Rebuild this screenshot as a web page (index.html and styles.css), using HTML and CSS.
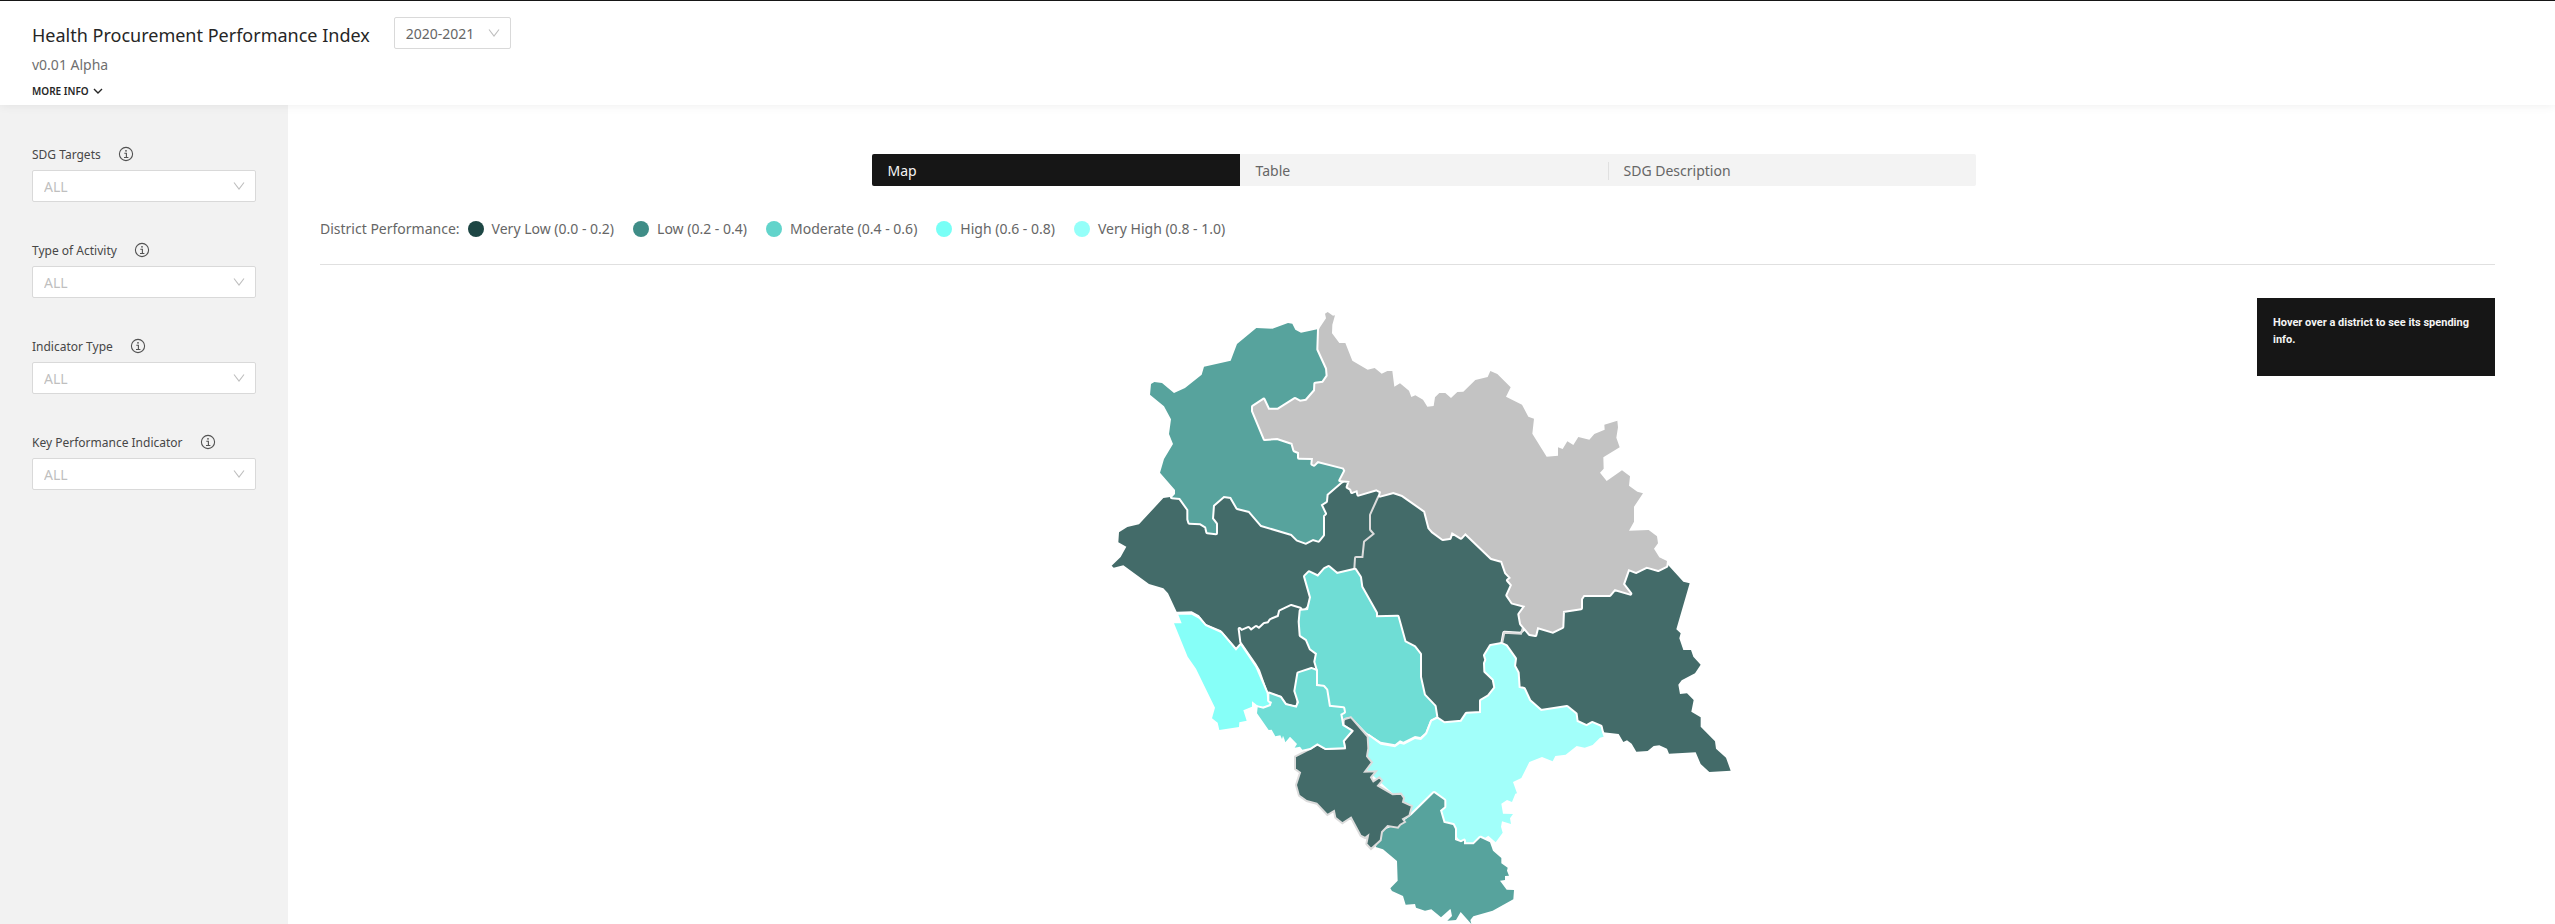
FILE: index.html
```html
<!DOCTYPE html>
<html lang="en">
<head>
<meta charset="utf-8">
<title>Health Procurement Performance Index</title>
<link rel="stylesheet" href="styles.css">
</head>
<body>
<svg class="defs" aria-hidden="true">
  <symbol id="chevron" viewBox="0 0 12 12"><path d="M1 2.5 6 9.2 11 2.5" fill="none" stroke="currentColor" stroke-width="1.1"/></symbol>
  <symbol id="info" viewBox="0 0 16 16"><circle cx="8" cy="8" r="6.6" fill="none" stroke="currentColor" stroke-width="1.1"/><path d="M6.3 7.3h2.1v4.2M6 11.5h4.4" fill="none" stroke="currentColor" stroke-width="1.1"/><circle cx="8" cy="4.8" r=".9" fill="currentColor"/></symbol>
</svg>
<header class="header">
  <div class="title-row">
    <h1 class="title">Health Procurement Performance Index</h1>
    <div class="select select-year">
      <select aria-label="Year"><option>2020-2021</option></select>
      <svg class="chevron"><use href="#chevron"/></svg>
    </div>
  </div>
  <p class="version">v0.01 Alpha</p>
  <button class="more" type="button">MORE INFO
    <svg class="more-icon" viewBox="0 0 10 10"><path d="M1 3l4 4 4-4" fill="none" stroke="currentColor" stroke-width="1.4"/></svg>
  </button>
</header>
<div class="page">
  <aside class="sidebar">
    <div class="field">
      <div class="field-head"><label for="sdg">SDG Targets</label><button class="info" type="button" aria-label="About SDG targets"><svg><use href="#info"/></svg></button></div>
      <div class="select"><select id="sdg"><option>ALL</option></select><svg class="chevron"><use href="#chevron"/></svg></div>
    </div>
    <div class="field">
      <div class="field-head"><label for="activity">Type of Activity</label><button class="info" type="button" aria-label="About type of activity"><svg><use href="#info"/></svg></button></div>
      <div class="select"><select id="activity"><option>ALL</option></select><svg class="chevron"><use href="#chevron"/></svg></div>
    </div>
    <div class="field">
      <div class="field-head"><label for="indicator">Indicator Type</label><button class="info" type="button" aria-label="About indicator type"><svg><use href="#info"/></svg></button></div>
      <div class="select"><select id="indicator"><option>ALL</option></select><svg class="chevron"><use href="#chevron"/></svg></div>
    </div>
    <div class="field">
      <div class="field-head"><label for="kpi">Key Performance Indicator</label><button class="info" type="button" aria-label="About key performance indicator"><svg><use href="#info"/></svg></button></div>
      <div class="select"><select id="kpi"><option>ALL</option></select><svg class="chevron"><use href="#chevron"/></svg></div>
    </div>
  </aside>
  <main class="main">
    <div class="tabs-wrap">
      <div class="tabs" role="tablist">
        <button class="tab tab-active" type="button" role="tab" aria-selected="true">Map</button>
        <button class="tab" type="button" role="tab" aria-selected="false">Table</button>
        <button class="tab tab-divided" type="button" role="tab" aria-selected="false">SDG Description</button>
      </div>
    </div>
    <div class="legend">
      <span class="legend-title">District Performance:</span>
      <ul class="legend-list">
        <li><i class="dot dot-very-low"></i>Very Low (0.0 - 0.2)</li>
        <li><i class="dot dot-low"></i>Low (0.2 - 0.4)</li>
        <li><i class="dot dot-moderate"></i>Moderate (0.4 - 0.6)</li>
        <li><i class="dot dot-high"></i>High (0.6 - 0.8)</li>
        <li><i class="dot dot-very-high"></i>Very High (0.8 - 1.0)</li>
      </ul>
    </div>
    <section class="map-area">
      <svg class="map" viewBox="0 0 1920 1872" role="img" aria-label="District map">
        <path class="d very-low" d="M216 590L190 594 117 673 82 681 57 697 55 727 79 740 62 771 35 797 41 803 70 796 147 852 190 865 204 880 230 935 275 934 297 946 316 971 363 991 408 1044 440 1030 600 940 640 900 700 830 765 810 768 774 790 774 795 726 825 702 813 688 813 645 838 585 838 572 740 540 600 600 300 560 240 590Z"/>
        <path class="d very-low grey-edge" d="M838 590L813 645 813 688 825 702 795 726 790 774 768 774 766 806 900 1200 1030 1300 1180 1230 1200 1050 1207 1027 1213 998 1263 1001 1268 985 1300 930 1250 780 1100 680 980 620 900 570Z"/>
        <path class="d very-low" d="M1705 796L1750 845 1769 850 1729 988 1742 1000 1738 1015 1750 1050 1773 1050 1780 1070 1802 1094 1785 1120 1745 1141 1735 1154 1740 1182 1761 1180 1781 1200 1774 1235 1802 1252 1802 1280 1845 1324 1848 1346 1878 1373 1892 1412 1828 1416 1802 1392 1787 1357 1707 1361 1701 1346 1678 1336 1661 1338 1643 1353 1609 1355 1595 1331 1581 1321 1570 1326 1556 1302 1510 1297 1480 1290 1400 1260 1300 1250 1230 1150 1207 1030 1213 998 1263 1001 1290 980 1340 960 1500 850 1650 780Z"/>
        <path class="grey-line" d="M1207 1027L1213 998 1263 1001 1268 985"/>
        <path class="d low" d="M216 592L225 582 225 570 180 518 192 477 219 432 207 402 213 358 192 319 150 284 153 252 163 246 186 249 222 279 255 264 305 224 312 200 392 182 411 132 469 84 517 86 564 69 577 71 586 89 603 98 652 88 700 200 670 280 560 380 700 450 760 520 720 548 680 583 678 604 662 614 675 641 669 647 669 705 655 722 639 717 617 728 592 719 575 702 484 675 448 633 412 624 393 591 371 588 339 616 336 656 348 672 348 700 322 697 318 680 301 670 268 668 265 658 265 629 240 594Z"/>
        <path class="d none" d="M657 88L655 148 681 205 683 228 669 248 646 251 645 272 619 302 600 305 585 297 534 329 505 329 491 299 459 320 459 333 494 417 532 414 577 429 583 451 597 457 597 473 639 474 637 492 642 494 653 483 731 503 736 512 721 541 749 543 743 561 753 567 756 576 772 570 775 584 829 568 843 575 840 587 880 576 907 585 975 633 988 683 997 694 1028 717 1049 714 1055 696 1083 713 1096 699 1174 774 1206 783 1218 818 1233 834 1224 841 1236 855 1222 886 1237 908 1276 918 1258 943 1263 971 1289 1002 1306 1005 1312 981 1358 995 1387 981 1389 933 1443 925 1443 897 1451 885 1529 885 1544 867 1591 881 1569 853 1585 807 1608 816 1640 800 1675 810 1699 798 1701 783 1678 772 1662 746 1674 730 1671 709 1646 690 1587 692 1602 665 1602 620 1629 580 1612 575 1587 557 1590 529 1566 511 1520 543 1500 518 1511 506 1510 472 1559 442 1549 413 1554 382 1552 362 1513 374 1514 389 1483 402 1468 419 1435 411 1420 435 1402 424 1388 447 1374 442 1374 467 1340 470 1297 401 1302 356 1285 350 1266 314 1218 290 1232 262 1192 222 1171 213 1163 231 1126 240 1090 275 1072 276 1053 294 1036 279 1018 279 1005 292 1001 318 982 320 969 299 946 286 934 291 927 272 900 250 883 260 877 213 862 213 845 221 824 204 803 209 757 182 736 129 718 129 696 100 697 74 705 46 699 47 683 36 675 41 678 55 660 82Z"/>
        <path class="d very-low" d="M419 987L424 993 445 984 453 992 468 981 477 987 493 972 505 970 512 960 536 950 540 934 573 918 600 926 650 1000 680 1090 640 1140 592 1190 588 1218 558 1210 543 1188 503 1175 480 1110 468 1090 424 1026Z"/>
        <path class="d moderate" d="M602 932L624 930 633 892 615 829 627 817 654 830 674 807 686 801 711 822 765 809 780 832 784 861 828 939 828 952 893 950 914 1026 943 1041 960 1063 960 1131 972 1185 1004 1219 1009 1250 991 1260 976 1298 961 1311 945 1308 910 1325 900 1321 885 1333 842 1325 800 1298 753 1250 735 1254 728 1258 724 1243 735 1238 733 1222 690 1217 682 1168 672 1157 654 1153 654 1112 646 1085 651 1060 632 1046 620 1018 602 1006 599 965Z"/>
        <path class="d high" d="M235 944L275 944 297 956 316 978 363 999 408 1052 422 1036 466 1101 500 1180 502 1203 510 1210 505 1216 488 1222 473 1217 467 1212 456 1204 456 1220 430 1231 440 1262 418 1267 417 1281 358 1290 353 1268 336 1255 345 1223 288 1106 263 1070 222 970 245 970Z"/>
        <path class="d very-high" d="M1012 1256L1033 1270 1084 1265 1100 1241 1143 1239 1143 1202 1166 1189 1186 1163 1181 1138 1156 1114 1155 1090 1159 1080 1155 1066 1172 1038 1205 1032 1218 1038 1245 1076 1242 1098 1253 1118 1256 1163 1272 1167 1288 1202 1323 1233 1401 1221 1427 1242 1430 1265 1460 1279 1477 1269 1502 1280 1506 1297 1511 1310 1500 1313 1478 1335 1454 1343 1430 1338 1397 1364 1366 1368 1358 1384 1326 1371 1288 1386 1264 1434 1239 1446 1251 1480 1246 1481 1236 1506 1221 1500 1204 1511 1209 1541 1239 1542 1230 1555 1233 1572 1206 1564 1203 1580 1208 1598 1187 1627 1165 1607 1100 1650 1003 1520 935 1540 900 1500 790 1400 806 1308 842 1334 885 1342 900 1331 912 1334 945 1317 963 1320 981 1302 996 1264Z"/>
        <path class="d low" d="M1002 1479L1033 1501 1033 1520 1020 1531 1031 1568 1059 1575 1065 1587 1065 1620 1083 1627 1092 1622 1092 1633 1121 1633 1141 1613 1170 1627 1179 1652 1204 1674 1204 1690 1223 1703 1221 1712 1227 1727 1215 1728 1215 1740 1200 1742 1220 1769 1242 1770 1240 1798 1178 1832 1120 1849 1111 1860 1114 1872 1082 1836 1068 1860 1042 1862 1056 1848 1052 1828 1050 1828 1023 1852 994 1828 975 1832 948 1823 945 1812 917 1814 909 1788 876 1773 871 1765 893 1742 891 1683 849 1648 827 1641 850 1590 900 1570 935 1545Z"/>
        <path class="solan" d="M753 1252L735 1257 731 1262 731 1276 758 1293 731 1323 735 1345 677 1347 652 1333 630 1347 585 1370 585 1407 600 1418 588 1455 597 1487 620 1503 650 1511 682 1545 702 1533 706 1553 727 1570 753 1553 782 1607 795 1614 804 1607 799 1632 813 1647 842 1621 846 1596 863 1578 894 1583 901 1574 915 1566 909 1557 928 1547 936 1518 909 1506 912 1494 903 1481 878 1483 834 1457 847 1442 838 1432 820 1444 813 1432 828 1414 795 1415 816 1387 801 1369 805 1345 803 1310Z"/>
        <path class="d moderate" d="M635 1107L595 1120 586 1173 597 1207 590 1223 556 1215 541 1193 508 1181 508 1202 516 1206 512 1218 490 1226 473 1222 471 1240 506 1290 515 1289 526 1309 541 1306 546 1317 549 1307 553 1317 556 1327 570 1310 591 1332 584 1343 600 1340 607 1349 630 1344 652 1330 677 1344 732 1342 728 1322 753 1293 727 1277 721 1242 732 1236 730 1225 687 1220 679 1170 670 1160 648 1158 648 1112Z"/>
      </svg>
      <div class="card"><p>Hover over a district to see its spending info.</p></div>
    </section>
  </main>
</div>
</body>
</html>
```
FILE: styles.css
```css
* { box-sizing: border-box; }
body {
  margin: 0;
  min-height: 100vh;
  display: flex;
  flex-direction: column;
  font-family: "Noto Sans", sans-serif;
  font-size: 14px;
  color: #666;
  background: #fff;
}
button, select { font: inherit; color: inherit; }
.defs { display: none; }
.header {
  position: relative;
  display: flex;
  flex-direction: column;
  align-items: flex-start;
  padding: 16px 32px 7px;
  border-top: 1px solid #161616;
  background: #fff;
  box-shadow: 0 0 10px rgba(0, 0, 0, .08);
}
.title-row { display: flex; align-items: flex-start; gap: 24px; }
.title {
  margin: 0;
  font-size: 18px;
  font-weight: 400;
  line-height: 36px;
  color: #262626;
}
.version { margin: 2px 0 9px; line-height: 20px; color: #6f6f6f; }
.more {
  display: flex;
  align-items: center;
  gap: 4px;
  padding: 0;
  border: 0;
  background: none;
  font-size: 10px;
  font-weight: 600;
  line-height: 14px;
  color: #262626;
}
.more-icon { width: 10px; height: 10px; }
.select { position: relative; }
.select select {
  appearance: none;
  display: block;
  width: 100%;
  height: 32px;
  padding: 0 11px;
  border: 1px solid #d9d9d9;
  border-radius: 2px;
  background: #fff;
  color: #bfbfbf;
}
.chevron {
  position: absolute;
  right: 11px;
  top: 10px;
  width: 12px;
  height: 12px;
  color: #bfbfbf;
  pointer-events: none;
}
.select-year { width: 117px; }
.select-year select { color: #666; }
.page { flex: 1; display: flex; }
.sidebar {
  width: 288px;
  flex: none;
  display: flex;
  flex-direction: column;
  gap: 32px;
  padding: 33px 32px;
  background: #f2f2f2;
}
.field-head {
  display: flex;
  align-items: center;
  gap: 17px;
  height: 32px;
  font-size: 12px;
  color: #474747;
}
.info { display: flex; padding: 0; border: 0; background: none; color: #525252; }
.info svg { width: 16px; height: 16px; }
.main { flex: 1; min-width: 0; padding: 49px 60px 0 32px; }
.tabs-wrap { display: flex; justify-content: center; padding-left: 32px; }
.tabs {
  display: grid;
  grid-template-columns: repeat(3, 1fr);
  width: 1104px;
  border-radius: 2px;
  overflow: hidden;
  background: #f3f3f3;
}
.tab {
  height: 32px;
  padding: 0 16px;
  border: 0;
  background: none;
  text-align: left;
}
.tab-active { background: #161616; color: #f4f4f4; }
.tab-divided {
  background: linear-gradient(#e0e0e0, #e0e0e0) 0 8px / 1px 18px no-repeat;
}
.legend {
  display: flex;
  align-items: center;
  gap: 8px;
  padding: 32px 0 24px;
  line-height: 22px;
  border-bottom: 1px solid #e0e0e0;
}
.legend-list { display: flex; gap: 19px; margin: 0; padding: 0; list-style: none; }
.legend-list li { display: flex; align-items: center; gap: 8px; }
.dot { width: 16px; height: 16px; border-radius: 50%; }
.dot-very-low { background: #1d4644; }
.dot-low { background: #3f8d87; }
.dot-moderate { background: #62d4cb; }
.dot-high { background: #78fff6; }
.dot-very-high { background: #94fff9; }
.map-area { position: relative; display: flex; justify-content: center; padding: 35px 0 0 24px; }
.map { display: block; width: 640px; max-width: 100%; }
.d { stroke: #fff; stroke-width: 12; stroke-linejoin: round; paint-order: stroke; }
.very-low { fill: #436b69; }
.low { fill: #57a39d; }
.moderate { fill: #6fddd5; }
.high { fill: #86fff8; }
.very-high { fill: #a2fffa; }
.none { fill: #c3c3c3; }
.grey-edge { stroke: #dcdcdc; }
.grey-line { fill: none; stroke: #dcdcdc; stroke-width: 6; }
.solan { fill: #436b69; stroke: #dcdcdc; stroke-width: 6; }
.card {
  position: absolute;
  top: 33px;
  right: 0;
  width: 238px;
  min-height: 78px;
  padding: 16px;
  background: #161616;
  color: #f4f4f4;
  font-family: Roboto, "Noto Sans", sans-serif;
  font-size: 11px;
  font-weight: 700;
  line-height: 17px;
}
.card p { margin: 0; }
```
